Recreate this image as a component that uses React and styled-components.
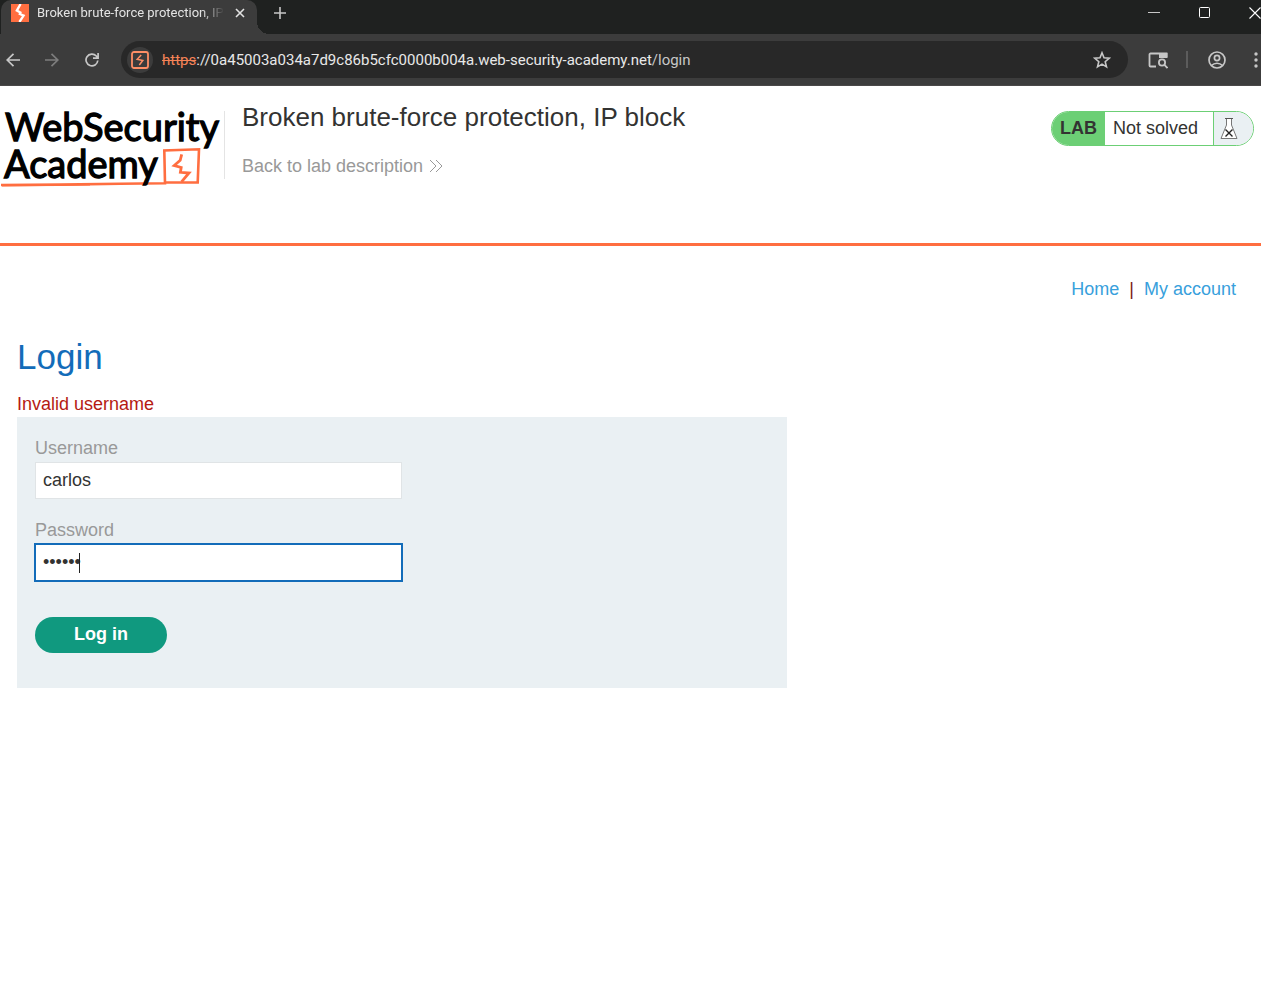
import React from "react";
import styled, { createGlobalStyle } from "styled-components";

const GlobalStyle = createGlobalStyle`
  *, *::before, *::after { box-sizing: border-box; }
  body {
    margin: 0;
    background: #fff;
    color: #333332;
    font: 18px/20px "Liberation Sans", Arial, sans-serif;
    overflow-x: hidden;
  }
  button, input { font: inherit; }
`;

const chromeFont = `Roboto, "Noto Sans", sans-serif`;

const Browser = styled.header`
  background: #3c3c3c;
  border-bottom: 1px solid #4a4848;
  font-family: ${chromeFont};
  overflow: hidden;
`;

const TabStrip = styled.div`
  display: flex;
  align-items: stretch;
  height: 34px;
  padding-left: 1px;
  background: #1f2120;
`;

const Tab = styled.div`
  position: relative;
  display: flex;
  align-items: center;
  gap: 8px;
  width: 256px;
  padding: 0 9px 8px 10px;
  background: #3c3c3c;
  border-radius: 10px 10px 0 0;

  &::after {
    content: "";
    position: absolute;
    left: 100%;
    bottom: 0;
    width: 12px;
    height: 12px;
    background: radial-gradient(circle at 100% 0, transparent 12px, #3c3c3c 12px);
  }
`;

const TabTitle = styled.span`
  flex: 1;
  overflow: hidden;
  white-space: nowrap;
  color: #e3e3e3;
  font-size: 13px;
  line-height: 20px;
  mask-image: linear-gradient(to right, #000 88%, transparent);
`;

const IconButton = styled.button`
  display: grid;
  place-items: center;
  flex: none;
  width: ${(p) => p.$w || 20}px;
  height: ${(p) => p.$h || 26}px;
  padding: 0;
  border: 0;
  background: none;
  color: ${(p) => p.$color || "#c7c7c7"};
  svg { display: block; }
`;

const NewTab = styled(IconButton)`
  margin-left: 13px;
`;

const WindowControls = styled.div`
  display: flex;
  margin: 0 -19px 0 auto;
`;

const Toolbar = styled.div`
  display: flex;
  align-items: center;
  height: 51px;
  padding-left: 3px;
`;

const NavButtons = styled.div`
  display: flex;
  gap: 19px;
  margin-right: 18px;
`;

const AddressBar = styled.div`
  display: flex;
  align-items: center;
  flex: 1;
  height: 37px;
  padding: 0 16px 0 6px;
  border-radius: 19px;
  background: #282828;
`;

const SiteChip = styled.span`
  display: grid;
  place-items: center;
  width: 26px;
  height: 26px;
  margin-right: 9px;
  border-radius: 50%;
  background: #3c3c3c;
`;

const Url = styled.span`
  flex: 1;
  color: #e8e8e8;
  font-size: 15px;
  white-space: nowrap;
  s { color: #f58357; }
  small { color: #c7c7c7; font-size: inherit; }
`;

const ToolbarEnd = styled.div`
  display: flex;
  align-items: center;
  gap: 18px;
  margin: 0 -5px 0 20px;
`;

const ToolbarRule = styled.span`
  width: 2px;
  height: 17px;
  background: #5c5c5c;
`;

const LabHeader = styled.section`
  display: flex;
  align-items: flex-start;
  height: 160px;
  padding: 17px 7px 0 0;
  border-bottom: 3px solid #ff6e40;
`;

const LogoLink = styled.a`
  display: block;
  width: 225px;
  height: 68px;
  margin-top: 8px;
  border-right: 1px solid #e4e4e4;
  svg { display: block; overflow: visible; }
`;

const LabInfo = styled.div`
  flex: 1;
  padding-left: 17px;
`;

const LabTitle = styled.h2`
  margin: 0 0 24px;
  font-size: 26px;
  line-height: 28px;
  font-weight: 400;
`;

const BackLink = styled.a`
  display: inline-flex;
  align-items: center;
  gap: 6px;
  color: #999;
  line-height: 22px;
  text-decoration: none;
`;

const Status = styled.div`
  display: flex;
  height: 35px;
  margin-top: 8px;
  border: 1px solid #6ccf75;
  border-radius: 18px;
  overflow: hidden;
  line-height: 33px;
`;

const StatusTag = styled.span`
  padding: 0 8px;
  background: #6ccf75;
  font-weight: 700;
`;

const StatusText = styled.span`
  padding: 0 15px 0 8px;
`;

const StatusIcon = styled.span`
  display: grid;
  place-items: center start;
  width: 40px;
  padding-left: 6px;
  border-left: 1px solid #6ccf75;
  background: #eaf0f3;
`;

const Content = styled.main`
  padding: 33px 17px;
`;

const AccountNav = styled.nav`
  display: flex;
  justify-content: flex-end;
  gap: 10px;
  padding-right: 8px;
  color: #7a2010;
  a { color: #38a0dc; text-decoration: none; }
`;

const Heading = styled.h1`
  margin: 38px 0 17px;
  color: #136cb9;
  font-size: 35px;
  line-height: 40px;
  font-weight: 400;
`;

const ErrorText = styled.p`
  margin: 0 0 3px;
  color: #b51a12;
`;

const LoginForm = styled.form`
  max-width: 770px;
  padding: 21px 18px 35px;
  background: #eaf0f3;
`;

const Field = styled.div`
  margin-bottom: 21px;
`;

const Label = styled.label`
  display: block;
  margin-bottom: 4px;
  color: #999;
`;

const InputWrap = styled.div`
  position: relative;
  width: 50%;
`;

const Caret = styled.span`
  position: absolute;
  top: 9px;
  left: 44px;
  width: 1px;
  height: 20px;
  background: #222;
  pointer-events: none;
`;

const Input = styled.input`
  display: block;
  width: 100%;
  height: 37px;
  padding: 0 7px;
  border: 1px solid #e0e4e6;
  border-radius: 0;
  background: #fff;
  color: #333332;
  caret-color: ${(p) => (p.$ownCaret ? "transparent" : "auto")};
  outline: none;
  &:focus {
    border-color: #136cb9;
    box-shadow: 0 0 0 1px #136cb9;
  }
`;

const Submit = styled.button`
  display: block;
  width: 132px;
  height: 36px;
  margin-top: 36px;
  padding: 0 0 2px;
  border: 0;
  border-radius: 18px;
  background: #10997f;
  color: #fff;
  font-weight: 700;
`;

const Svg = ({ w = 18, h = w, box, children, sw = 2 }) => (
  <svg width={w} height={h} viewBox={box || `0 0 ${w} ${h}`} fill="none" stroke="currentColor" strokeWidth={sw} aria-hidden="true">
    {children}
  </svg>
);

const Favicon = () => (
  <Svg w={18}>
    <path d="M0 0h18v18H0z" fill="#ff6e40" stroke="none" />
    <path d="M9.600 0 5.800 6.600 9.400 8.600 8.800 10l3.800 1.600L8.400 18" stroke="#fff" strokeWidth="2.300" />
  </Svg>
);

const Logo = () => (
  <svg width="224" height="80" viewBox="0 0 224 80" role="img" aria-label="Web Security Academy">
    <g fill="none" stroke="#ff6e40">
      <path d="M1 74 60 73.600 120 72.800 165 72.300 164.300 39.500 199 38.300 197.700 71.500 166 71.200" strokeWidth="2.600" />
      <path d="M2 75 90 74" strokeWidth="1" />
      <path d="m181.700 43.300-1.500 6-6 5.200 7 2-.8 4.800 8.600.700-7.500 8.800" strokeWidth="2.800" />
    </g>
    <g fill="#000" stroke="#000" strokeWidth="1.300" fontFamily="Lato, 'Liberation Sans', sans-serif" fontSize="38">
      <text x="5" y="30">Web</text>
      <text x="83" y="30">Security</text>
      <text x="4" y="67">Academy</text>
    </g>
  </svg>
);

export default function App() {
  return (
    <>
      <GlobalStyle />
      <Browser>
        <TabStrip>
          <Tab>
            <Favicon />
            <TabTitle>Broken brute-force protection, IP block</TabTitle>
            <IconButton aria-label="Close tab" $w={16} $color="#e3e3e3">
              <Svg w={10} sw={1.6}><path d="m1 1 8 8M9 1 1 9" /></Svg>
            </IconButton>
          </Tab>
          <NewTab aria-label="New tab">
            <Svg w={12} sw={1.6}><path d="M6 0v12M0 6h12" /></Svg>
          </NewTab>
          <WindowControls>
            <IconButton aria-label="Minimize" $w={50}><Svg w={12} sw={1}><path d="M0 5.500h12" /></Svg></IconButton>
            <IconButton aria-label="Maximize" $w={51} $color="#fff"><Svg w={12} sw={1}><rect x=".5" y=".5" width="10" height="10" rx="1" /></Svg></IconButton>
            <IconButton aria-label="Close" $w={50} $color="#fff"><Svg w={12} sw={1.1}><path d="m.5.5 11 11M11.500.5l-11 11" /></Svg></IconButton>
          </WindowControls>
        </TabStrip>
        <Toolbar>
          <NavButtons>
            <IconButton aria-label="Back">
              <Svg w={14} sw={1.7}><path d="M14 7H1M7.500.800 1.200 7l6.300 6.200" /></Svg>
            </IconButton>
            <IconButton aria-label="Forward" $color="#7d7d7d">
              <Svg w={14} sw={1.7}><path d="M0 7h13M6.500.800 12.800 7l-6.300 6.200" /></Svg>
            </IconButton>
            <IconButton aria-label="Reload" $w={22}>
              <Svg w={14} sw={1.7}><path d="M12.800 7.500A5.900 5.900 0 1 1 11.300 3L13 5M13.100 0v5.200H8" /></Svg>
            </IconButton>
          </NavButtons>
          <AddressBar>
            <SiteChip>
              <Svg w={18} sw={1.8}>
                <rect x="1" y="1" width="16" height="16" rx="2" stroke="#ff8f66" />
                <path d="M10.200 4 6.200 8.300l5.600 1.200L8.300 14" stroke="#ff8f66" strokeWidth="1.500" />
              </Svg>
            </SiteChip>
            <Url><s>https</s>://0a45003a034a7d9c86b5cfc0000b004a.web-security-academy.net<small>/login</small></Url>
            <IconButton aria-label="Bookmark this tab">
              <Svg w={18} sw={1.6}><path d="m9 1.800 2 5 5.300.400-4.100 3.500 1.300 5.200L9 13.100l-4.500 2.800 1.300-5.200-4.100-3.500L7 6.800z" /></Svg>
            </IconButton>
          </AddressBar>
          <ToolbarEnd>
            <IconButton aria-label="Search side panel" $w={20}>
              <Svg w={20} h={18} sw={1.8}>
                <path d="M8 15.500H2.500a1 1 0 0 1-1-1v-11a1 1 0 0 1 1-1H18.500V6" />
                <path d="M11 2h8.500v5H11z" fill="currentColor" stroke="none" />
                <circle cx="14" cy="11.500" r="3.100" /><path d="m16.200 13.700 3.300 3.300" />
              </Svg>
            </IconButton>
            <ToolbarRule />
            <IconButton aria-label="Profile" $w={22}>
              <Svg w={18} sw={1.7}><circle cx="9" cy="9" r="8" /><circle cx="9" cy="7" r="2.600" /><path d="M3.500 14.500c3-3 8-3 11 0" /></Svg>
            </IconButton>
            <IconButton aria-label="Menu" $w={20}>
              <Svg w={4} h={16}><g fill="currentColor" stroke="none"><circle cx="2" cy="2" r="1.700" /><circle cx="2" cy="8" r="1.700" /><circle cx="2" cy="14" r="1.700" /></g></Svg>
            </IconButton>
          </ToolbarEnd>
        </Toolbar>
      </Browser>

      <LabHeader>
        <LogoLink href="#academy"><Logo /></LogoLink>
        <LabInfo>
          <LabTitle>Broken brute-force protection, IP block</LabTitle>
          <BackLink href="#description">
            Back to lab description
            <Svg w={14} sw={1}><path d="m1 1 6 6-6 6M7 1l6 6-6 6" /></Svg>
          </BackLink>
        </LabInfo>
        <Status>
          <StatusTag>LAB</StatusTag>
          <StatusText>Not solved</StatusText>
          <StatusIcon>
            <Svg w={18} h={23} sw={1}>
              <path d="M6.500 1.500V8L1 21.500h16L11.500 8V1.500" fill="#fff" stroke="#777" />
              <path d="M5 1.500h8" stroke="#555" />
              <path d="m5.500 12.500 7 7m0-7-7 7" stroke="#222" strokeWidth="1.400" />
            </Svg>
          </StatusIcon>
        </Status>
      </LabHeader>

      <Content>
        <AccountNav>
          <a href="#home">Home</a>
          <span>|</span>
          <a href="#my-account">My account</a>
        </AccountNav>
        <Heading>Login</Heading>
        <ErrorText>Invalid username</ErrorText>
        <LoginForm onSubmit={(e) => e.preventDefault()}>
          <Field>
            <Label htmlFor="username">Username</Label>
            <InputWrap>
              <Input id="username" name="username" defaultValue="carlos" />
            </InputWrap>
          </Field>
          <Field>
            <Label htmlFor="password">Password</Label>
            <InputWrap>
              <Input id="password" name="password" type="password" defaultValue="peters" $ownCaret autoFocus />
              <Caret />
            </InputWrap>
          </Field>
          <Submit type="submit">Log in</Submit>
        </LoginForm>
      </Content>
    </>
  );
}
